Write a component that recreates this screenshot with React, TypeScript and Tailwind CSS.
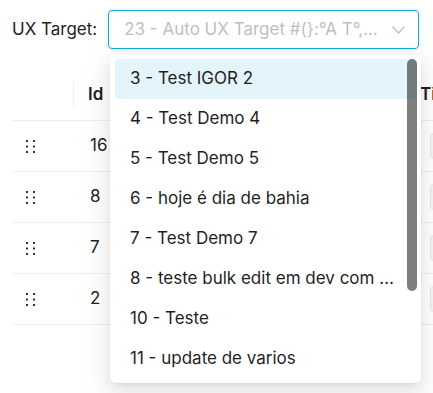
const options = [
    '3 - Test IGOR 2',
    '4 - Test Demo 4',
    '5 - Test Demo 5',
    '6 - hoje é dia de bahia',
    '7 - Test Demo 7',
    '8 - teste bulk edit em dev com muitos registros',
    '10 - Teste',
    '11 - update de varios',
];

const rows = ['16', '8', '7', '2'];

const placeholder = '23 - Auto UX Target #(}:°A T°, ÇÃÉÍ target';

function DragHandle() {
    return (
        <svg width="9" height="13" viewBox="0 0 9 13" className="text-[#333]">
            <rect x="0" y="0" width="2" height="2" fill="currentColor" />
            <rect x="7" y="0" width="2" height="2" fill="currentColor" />
            <rect x="0" y="5.5" width="2" height="2" fill="currentColor" />
            <rect x="7" y="5.5" width="2" height="2" fill="currentColor" />
            <rect x="0" y="11" width="2" height="2" fill="currentColor" />
            <rect x="7" y="11" width="2" height="2" fill="currentColor" />
        </svg>
    );
}

export default function App() {
    return (
        <div className="relative w-[433px] h-[393px] overflow-hidden bg-white font-['Inter',sans-serif] text-[17px] text-[#1f1f1f]">
            {/* select row */}
            <div className="flex items-center h-[39px] mt-[10px] pl-3">
                <span className="mr-[11px] leading-none">UX Target:</span>
                <div className="flex items-center w-[311px] h-[39px] pl-[15px] pr-[13px] border border-[#18a6d6] rounded-[4px] shadow-[0_0_0_2px_rgba(24,166,214,0.08)]">
                    <span className="flex-1 truncate text-[#bfbfbf] pr-3">{placeholder}</span>
                    <svg width="13" height="8" viewBox="0 0 13 8" fill="none">
                        <polyline points="0.5,0.5 6.5,7 12.5,0.5" stroke="#bfbfbf" strokeWidth="1.2" />
                    </svg>
                </div>
            </div>

            {/* table behind */}
            <div className="mt-[21px] ml-3 w-[480px]">
                <div className="flex items-center h-[51px] border-b border-[#f0f0f0]">
                    <div className="w-[61px]" />
                    <div className="w-px h-[27px] bg-[#f0f0f0]" />
                    <div className="w-[333px] pl-[14px] font-semibold">Id</div>
                    <div className="pl-[13px] font-semibold">Title</div>
                </div>
                {rows.map((id) => (
                    <div key={id} className="flex items-center h-[51px] border-b border-[#f0f0f0]">
                        <div className="w-[62px] pl-[14px] flex items-center">
                            <DragHandle />
                        </div>
                        <div className="w-[333px] pl-[16px]">{id}</div>
                        <div className="pl-[23px]">
                            <div className="w-[60px] h-[26px] rounded-[4px] border border-[#e5e5e5] bg-[#f5f5f5]" />
                        </div>
                    </div>
                ))}
            </div>

            {/* dropdown overlay */}
            <div className="absolute left-[110px] top-[55px] w-[311px] h-[328px] p-1 pl-[5px] bg-white rounded-[6px] shadow-[0_6px_16px_0_rgba(0,0,0,0.08),0_3px_6px_-4px_rgba(0,0,0,0.12),0_9px_28px_8px_rgba(0,0,0,0.05)]">
                {options.map((o, i) => (
                    <div
                        key={o}
                        className={
                            i === 0
                                ? 'flex items-center h-10 pl-[15px] pr-[15px] rounded-[4px] bg-[#e3f5fa]'
                                : 'flex items-center h-10 pl-[15px] pr-[15px] rounded-[4px]'
                        }
                    >
                        <span className="truncate">{o}</span>
                    </div>
                ))}
                <div className="absolute right-1 top-1 w-[10px] h-[232px] rounded-full bg-black/50" />
            </div>
        </div>
    );
}
